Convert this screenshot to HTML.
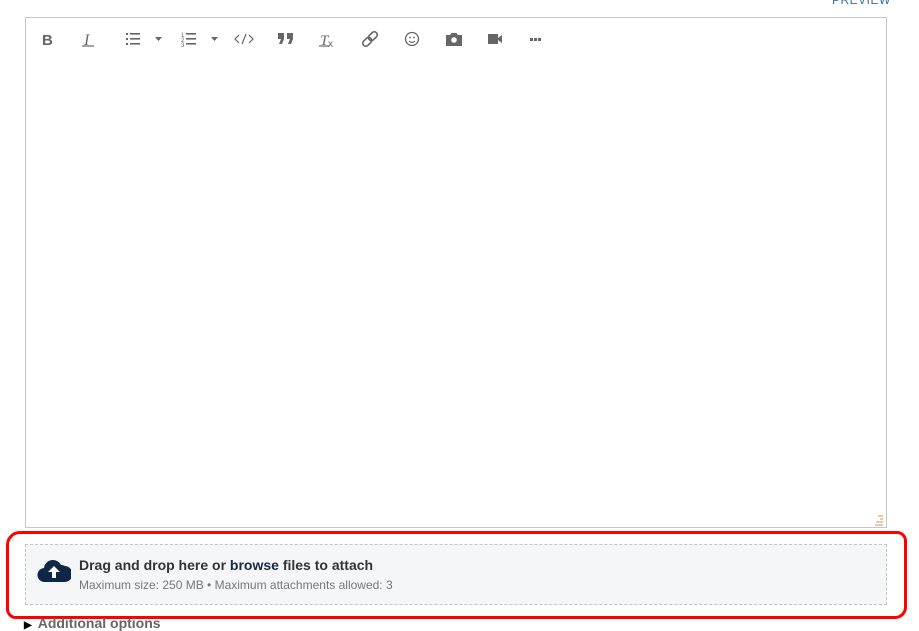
<!DOCTYPE html>
<html><head><meta charset="utf-8"><style>
body{margin:0;width:919px;height:625px;background:#fff;font-family:"Liberation Sans",sans-serif;position:relative;overflow:hidden}
.prev{position:absolute;left:832px;top:-7px;font-size:12px;color:#3a6ea5;letter-spacing:0.5px}
.ed{position:absolute;left:25px;top:17px;width:860px;height:509px;border:1px solid #c6c6c6}
.drop{position:absolute;left:25px;top:544px;width:860px;height:59px;border:1px dashed #c4c4c4;background:#f5f6f8}
.t1{position:absolute;left:53px;top:12px;font-size:14px;font-weight:bold;color:#333}
.t1 b{color:#1a2740}
.t2{position:absolute;left:53px;top:33px;font-size:12px;color:#777}
.oval{position:absolute;left:6px;top:531px;width:895px;height:82px;border:3.5px solid #f00;border-radius:14px 10px 12px 10px}
.add{position:absolute;left:40px;top:615px;font-size:14px;color:#666;font-weight:bold}
</style></head><body>
<div class="prev">PREVIEW</div>
<div class="ed">
<svg width="860" height="509" style="position:absolute;left:0;top:0" fill="#666" stroke="#666">
<text x="16" y="27" font-size="15" font-weight="bold" stroke="none" font-family="Liberation Sans">B</text>
<text x="58" y="27" font-size="16" font-style="italic" stroke="none" font-family="Liberation Serif">I</text>
<line x1="56" y1="28" x2="68" y2="28" stroke-width="1.2"/>
<g stroke="none"><rect x="100" y="15" width="2" height="2"/><rect x="100" y="20" width="2" height="2"/><rect x="100" y="25" width="2" height="2"/>
<rect x="104" y="15" width="10" height="1.6"/><rect x="104" y="20" width="10" height="1.6"/><rect x="104" y="25" width="10" height="1.6"/>
<path d="M129 19h7l-3.5 4z"/>
<text x="155" y="19" font-size="6">1</text><text x="155" y="24" font-size="6">2</text><text x="155" y="29" font-size="6">3</text>
<rect x="160" y="15" width="10" height="1.6"/><rect x="160" y="20" width="10" height="1.6"/><rect x="160" y="25" width="10" height="1.6"/>
<path d="M185 19h7l-3.5 4z"/></g>
<path d="M213 17l-4 4 4 4M223 17l4 4-4 4M220 16l-4 10" fill="none" stroke-width="1.2"/>
<g stroke="none"><path d="M252 15h6v6l-2 5h-3l2-5h-3zM261 15h6v6l-2 5h-3l2-5h-3z"/></g>
<text x="294" y="27" font-size="15" font-style="italic" stroke="none" font-family="Liberation Serif">T</text>
<line x1="293" y1="28" x2="303" y2="28" stroke-width="1.2"/>
<text x="302" y="29" font-size="10" stroke="none">x</text>
<g fill="none" stroke-width="1.6" transform="rotate(-45 344 21)"><rect x="335" y="18" width="10" height="6" rx="3"/><rect x="343" y="18" width="10" height="6" rx="3"/></g>
<circle cx="386" cy="21" r="6.5" fill="none" stroke-width="1.3"/>
<circle cx="384" cy="19.5" r="0.9" stroke="none"/><circle cx="388" cy="19.5" r="0.9" stroke="none"/>
<path d="M383 23q3 3 6 0" fill="none" stroke-width="1.2"/>
<g stroke="none"><path d="M420 17h4l1.5-2h5l1.5 2h4v11h-16z"/><circle cx="428" cy="22" r="2.8" fill="#fff"/>
<path d="M462 16h10v10h-10zM472 20l4-3v8l-4-3z"/>
<rect x="504" y="20" width="3" height="3"/><rect x="508" y="20" width="3" height="3"/><rect x="512" y="20" width="3" height="3"/></g>
<g stroke="#d8944a" stroke-width="1"><line x1="852" y1="498" x2="857" y2="498"/><line x1="854" y1="501" x2="857" y2="501"/><line x1="850" y1="504" x2="857" y2="504"/><line x1="849" y1="507" x2="857" y2="507"/></g>
</svg>
</div>
<div class="drop">
<svg width="34" height="26" style="position:absolute;left:11px;top:12px" viewBox="0 0 34 26"><path d="M8 25a7 7 0 0 1-1-14 9 9 0 0 1 17-3 7 7 0 0 1 4 1 8 8 0 0 1-1 16z" fill="#0f2746"/><path d="M17 9l-6 6h4v6h4v-6h4z" fill="#fff"/></svg>
<div class="t1">Drag and drop here or <b>browse</b> files to attach</div>
<div class="t2">Maximum size: 250 MB • Maximum attachments allowed: 3</div>
</div>
<div class="oval"></div>
<div class="add" style="left:24px"><span style="color:#000;font-size:10px;margin-right:6px">▶</span>Additional options</div>
</body></html>
